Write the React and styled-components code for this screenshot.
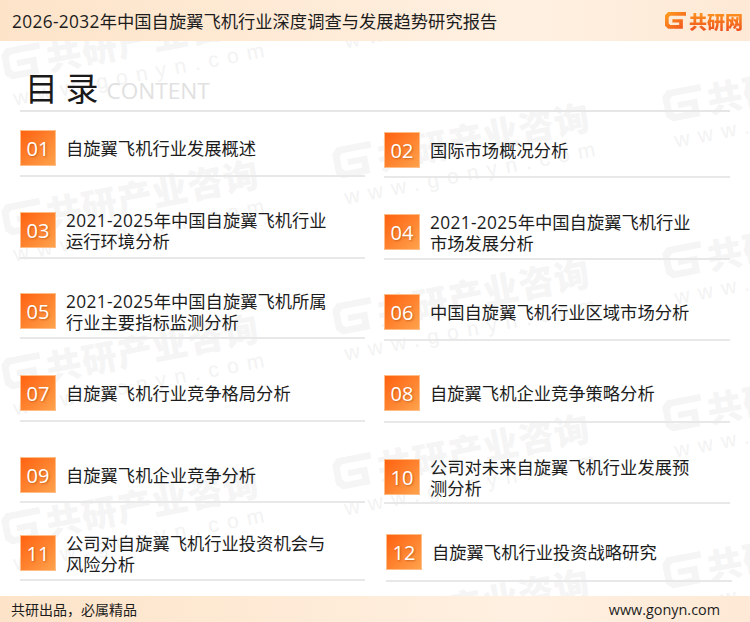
import React from 'react';
import styled, { createGlobalStyle } from 'styled-components';

const CN = `"Noto Sans CJK SC", "Noto Sans", sans-serif`;

const leftItems = [
    { no: '01', top: 18, height: 65, text: '自旋翼飞机行业发展概述' },
    { no: '03', top: 35, height: 82, text: '2021-2025年中国自旋翼飞机行业\n运行环境分析' },
    { no: '05', top: 34, height: 80, text: '2021-2025年中国自旋翼飞机所属\n行业主要指标监测分析' },
    { no: '07', top: 36, height: 83, text: '自旋翼飞机行业竞争格局分析' },
    { no: '09', top: 35, height: 81, text: '自旋翼飞机企业竞争分析' },
    { no: '11', top: 32, height: 78, text: '公司对自旋翼飞机行业投资机会与\n风险分析' },
];

const rightItems = [
    { no: '02', top: 20, height: 66, text: '国际市场概况分析' },
    { no: '04', top: 36, height: 82, text: '2021-2025年中国自旋翼飞机行业\n市场发展分析' },
    { no: '06', top: 34, height: 81, text: '中国自旋翼飞机行业区域市场分析' },
    { no: '08', top: 34, height: 82, text: '自旋翼飞机企业竞争策略分析' },
    { no: '10', top: 36, height: 81, text: '公司对未来自旋翼飞机行业发展预\n测分析' },
    { no: '12', top: 30, height: 78, text: '自旋翼飞机行业投资战略研究', shift: 2 },
];

// left / vertical centre of the logo in each watermark stamp
const stamps = [
    [3, 65], [3, 221], [3, 375], [3, 530],
    [334, 8], [334, 164], [334, 320], [334, 475], [334, 630],
    [664, 107], [664, 264], [664, 417], [664, 574],
];

function LogoMark({ size, id, from, to }) {
    return (
        <svg width={size} height={size * 0.8} viewBox="0 0 40 32">
            <defs>
                <linearGradient id={id} x1="0" y1="0" x2="1" y2="1">
                    <stop offset="0" stopColor={from} />
                    <stop offset="1" stopColor={to} />
                </linearGradient>
            </defs>
            <path
                fill={`url(#${id})`}
                d="M6 0H40V7H10L7 10V22L10 25H27V20H14V14H34V32H6L0 26V6Z"
            />
        </svg>
    );
}

function Stamp({ left, top, index }) {
    return (
        <StampBox style={{ left, top: top - 22 }}>
            <StampTitle>
                <LogoMark size={40} id={`wm${index}`} from="#f5f5f5" to="#f5f5f5" />
                共研产业咨询
            </StampTitle>
            <StampUrl>www.gonyn.com</StampUrl>
        </StampBox>
    );
}

// digits run a little wider than the CJK font's own numerals
function withNumbers(text) {
    return text.split(/(\d[\d-]*\d)/).map((part, i) =>
        /^\d/.test(part) ? <Num key={i}>{part}</Num> : part
    );
}

function TocItem({ item }) {
    return (
        <Item top={item.top} height={item.height} shift={item.shift}>
            <Row>
                <Badge>{item.no}</Badge>
                <ItemText>{withNumbers(item.text)}</ItemText>
            </Row>
        </Item>
    );
}

export default function App() {
    return (
        <Page>
            <GlobalStyle />
            <Watermark>
                {stamps.map(([left, top], i) => (
                    <Stamp key={i} left={left} top={top} index={i} />
                ))}
            </Watermark>
            <Header>
                <HeaderTitle>{withNumbers('2026-2032年中国自旋翼飞机行业深度调查与发展趋势研究报告')}</HeaderTitle>
                <Brand>
                    <LogoMark size={21} id="brand" from="#ffa11f" to="#f0501e" />
                    <BrandName>共研网</BrandName>
                </Brand>
            </Header>
            <Main>
                <Heading>
                    <HeadingTitle>目 录</HeadingTitle>
                    <HeadingSub>CONTENT</HeadingSub>
                </Heading>
                <Columns>
                    <Column>
                        {leftItems.map((item) => <TocItem key={item.no} item={item} />)}
                    </Column>
                    <Column>
                        {rightItems.map((item) => <TocItem key={item.no} item={item} />)}
                    </Column>
                </Columns>
            </Main>
            <Footer>
                <FooterNote>共研出品，必属精品</FooterNote>
                <FooterUrl>www.gonyn.com</FooterUrl>
            </Footer>
        </Page>
    );
}

const GlobalStyle = createGlobalStyle`
    html, body {
        margin: 0;
        padding: 0;
        background: #fff;
    }
`

const Page = styled.div`
    position: relative;
    width: 750px;
    height: 622px;
    overflow: hidden;
    background: #fff;
    font-family: ${CN};
    display: flex;
    flex-direction: column;
`

const Watermark = styled.div`
    position: absolute;
    inset: 0;
    pointer-events: none;
`

const StampBox = styled.div`
    position: absolute;
    width: 280px;
    transform: rotate(-11deg);
    transform-origin: 0 22px;
`

const StampTitle = styled.div`
    display: flex;
    align-items: center;
    gap: 4px;
    font-size: 35px;
    font-weight: 900;
    line-height: 44px;
    letter-spacing: 1px;
    white-space: nowrap;
    color: #f5f5f5;
`

const StampUrl = styled.div`
    font-family: "Liberation Sans", sans-serif;
    font-size: 21px;
    line-height: 26px;
    letter-spacing: 8.5px;
    padding-left: 4px;
    white-space: nowrap;
    color: #f3f3f3;
`

const Num = styled.span`
    font-family: "Open Sans", sans-serif;
    letter-spacing: .35px;
`

const Header = styled.header`
    position: relative;
    height: 41px;
    flex: none;
    display: flex;
    align-items: center;
    justify-content: space-between;
    padding: 0 7px 0 12px;
    background: linear-gradient(90deg, #fde4c9 0%, #fff0e1 70%, #fde9d5 100%);
`

const HeaderTitle = styled.h1`
    margin: 0;
    font-size: 17.3px;
    font-weight: 400;
    color: #1c1c1c;
    white-space: nowrap;
`

const Brand = styled.div`
    display: flex;
    align-items: center;
    gap: 3px;
`

const BrandName = styled.span`
    font-size: 18px;
    font-weight: 900;
    line-height: 20px;
    background: linear-gradient(180deg, #ff9a1f, #ee4f1d);
    -webkit-background-clip: text;
    background-clip: text;
    color: transparent;
`

const Main = styled.main`
    position: relative;
    flex: 1;
    min-height: 0;
    padding: 0 20px;
`

const Heading = styled.div`
    height: 69px;
    padding: 0 0 0 5px;
    display: flex;
    align-items: flex-end;
    gap: 8px;
    border-bottom: 2px solid #e6e6e6;
`

const HeadingTitle = styled.div`
    font-size: 33px;
    line-height: 46px;
    color: #1a1a1a;
    white-space: nowrap;
`

const HeadingSub = styled.div`
    font-family: "Open Sans", sans-serif;
    font-size: 22.6px;
    line-height: 38px;
    color: #e1e1e1;
`

const Columns = styled.div`
    display: grid;
    grid-template-columns: 345px 346px;
    column-gap: 19px;
`

const Column = styled.div`
    display: flex;
    flex-direction: column;
`

const Item = styled.div`
    box-sizing: border-box;
    height: ${props => props.height}px;
    padding-top: ${props => props.top}px;
    margin-left: ${props => props.shift || 0}px;
    margin-right: ${props => -(props.shift || 0)}px;
    border-bottom: 2px solid #e8e8e8;
`

const Row = styled.div`
    height: 36px;
    display: flex;
    align-items: center;
    gap: 11px;
`

const Badge = styled.div`
    box-sizing: border-box;
    flex: none;
    width: 36px;
    height: 36px;
    display: flex;
    align-items: center;
    justify-content: center;
    border: 1px solid #ffbd8a;
    background: linear-gradient(135deg, #ff6210 0%, #ffa24c 100%);
    font-family: "Open Sans", sans-serif;
    font-size: 20px;
    color: #fff;
    text-shadow: 1px 1px 2px rgba(150, 60, 0, .5);
`

const ItemText = styled.div`
    margin-left: -1px;
    padding-top: 1px;
    font-size: 17.3px;
    line-height: 20.5px;
    color: #1c1c1c;
    white-space: pre-line;
`

const Footer = styled.footer`
    position: relative;
    height: 26px;
    flex: none;
    display: flex;
    align-items: center;
    justify-content: space-between;
    padding: 0 30px 0 11px;
    background: linear-gradient(90deg, #fde4c9 0%, #fff0e1 70%, #fde9d5 100%);
`

const FooterNote = styled.div`
    font-size: 14px;
    color: #1c1c1c;
`

const FooterUrl = styled.div`
    font-family: "Open Sans", sans-serif;
    font-size: 14.4px;
    color: #1c1c1c;
`
